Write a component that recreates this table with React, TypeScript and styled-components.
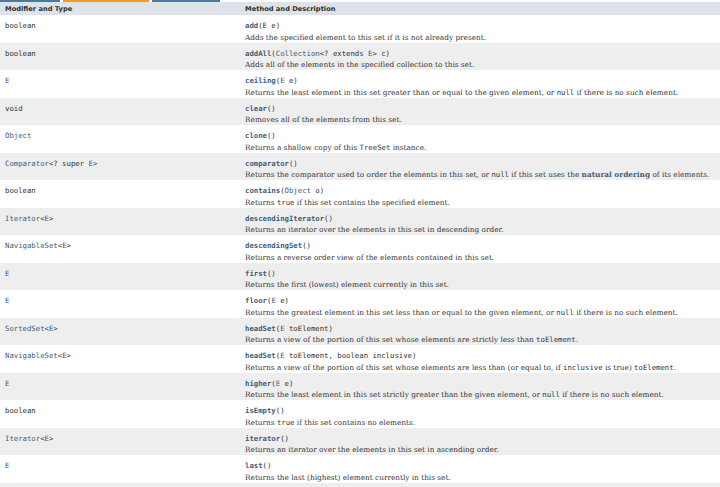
import React from "react";
import styled, { createGlobalStyle } from "styled-components";

const Global = createGlobalStyle`
  html, body { margin: 0; padding: 0; background: #ffffff; }
  body { overflow: hidden; }
`;

const Page = styled.div`
  width: 720px;
  height: 487px;
  overflow: hidden;
  background: #fff;
`;

const TabStrip = styled.div`
  display: flex;
  height: 2px;
  gap: 3px;
`;

const Tab = styled.div<{ $w: number; $active?: boolean }>`
  width: ${(p) => p.$w}px;
  background: ${(p) => (p.$active ? "#f8981d" : "#4d7a97")};
`;

const Table = styled.div`
  display: grid;
  grid-template-columns: 240px 1fr;
`;

const HeadCell = styled.div`
  background: #dee3e9;
  height: 13px;
  padding: 0 5px;
  display: flex;
  align-items: center;
  font-family: "DejaVu Sans", sans-serif;
  font-weight: bold;
  font-size: 6.7px;
  color: #2f312d;
`;

const Cell = styled.div<{ $alt: boolean }>`
  background: ${(p) => (p.$alt ? "#eeeeef" : "#ffffff")};
  padding: 5px 5px 0;
  height: 27.5px;
  box-sizing: border-box;
`;

const Filler = styled.div`
  grid-column: 1 / -1;
  background: #eeeeef;
  height: 10px;
`;

const CodeLine = styled.div`
  font-family: "DejaVu Sans Mono", monospace;
  font-size: 7.3px;
  line-height: 11.5px;
  color: #2f312d;
  white-space: nowrap;
`;

const Link = styled.span<{ $bold?: boolean }>`
  color: #3f5c77;
  font-weight: ${(p) => (p.$bold ? "bold" : "normal")};
`;

const Desc = styled.div`
  font-family: "DejaVu Serif", Georgia, serif;
  font-size: 7.35px;
  line-height: 11px;
  color: #353535;
  white-space: nowrap;
`;

const Code = styled.code`
  font-family: "DejaVu Sans Mono", monospace;
  font-size: 7.3px;
`;

const Strong = styled.span`
  font-weight: bold;
  color: #3f5c77;
`;

type Row = {
  type: React.ReactNode;
  name: string;
  params: React.ReactNode;
  desc: React.ReactNode;
};

const N = <Code>null</Code>;

const rows: Row[] = [
  { type: "boolean", name: "add", params: "(E e)", desc: "Adds the specified element to this set if it is not already present." },
  {
    type: "boolean",
    name: "addAll",
    params: (
      <>
        (<Link>Collection</Link>&lt;? extends <Link>E</Link>&gt; c)
      </>
    ),
    desc: "Adds all of the elements in the specified collection to this set.",
  },
  {
    type: <Link>E</Link>,
    name: "ceiling",
    params: <>(<Link>E</Link> e)</>,
    desc: <>Returns the least element in this set greater than or equal to the given element, or {N} if there is no such element.</>,
  },
  { type: "void", name: "clear", params: "()", desc: "Removes all of the elements from this set." },
  {
    type: <Link>Object</Link>,
    name: "clone",
    params: "()",
    desc: <>Returns a shallow copy of this <Code>TreeSet</Code> instance.</>,
  },
  {
    type: (
      <>
        <Link>Comparator</Link>&lt;? super <Link>E</Link>&gt;
      </>
    ),
    name: "comparator",
    params: "()",
    desc: (
      <>
        Returns the comparator used to order the elements in this set, or {N} if this set uses the <Strong>natural ordering</Strong> of its elements.
      </>
    ),
  },
  {
    type: "boolean",
    name: "contains",
    params: <>(<Link>Object</Link> o)</>,
    desc: <>Returns <Code>true</Code> if this set contains the specified element.</>,
  },
  {
    type: <><Link>Iterator</Link>&lt;<Link>E</Link>&gt;</>,
    name: "descendingIterator",
    params: "()",
    desc: "Returns an iterator over the elements in this set in descending order.",
  },
  {
    type: <><Link>NavigableSet</Link>&lt;<Link>E</Link>&gt;</>,
    name: "descendingSet",
    params: "()",
    desc: "Returns a reverse order view of the elements contained in this set.",
  },
  { type: <Link>E</Link>, name: "first", params: "()", desc: "Returns the first (lowest) element currently in this set." },
  {
    type: <Link>E</Link>,
    name: "floor",
    params: <>(<Link>E</Link> e)</>,
    desc: <>Returns the greatest element in this set less than or equal to the given element, or {N} if there is no such element.</>,
  },
  {
    type: <><Link>SortedSet</Link>&lt;<Link>E</Link>&gt;</>,
    name: "headSet",
    params: <>(<Link>E</Link> toElement)</>,
    desc: <>Returns a view of the portion of this set whose elements are strictly less than <Code>toElement</Code>.</>,
  },
  {
    type: <><Link>NavigableSet</Link>&lt;<Link>E</Link>&gt;</>,
    name: "headSet",
    params: <>(<Link>E</Link> toElement, boolean inclusive)</>,
    desc: (
      <>
        Returns a view of the portion of this set whose elements are less than (or equal to, if <Code>inclusive</Code> is true) <Code>toElement</Code>.
      </>
    ),
  },
  {
    type: <Link>E</Link>,
    name: "higher",
    params: <>(<Link>E</Link> e)</>,
    desc: <>Returns the least element in this set strictly greater than the given element, or {N} if there is no such element.</>,
  },
  {
    type: "boolean",
    name: "isEmpty",
    params: "()",
    desc: <>Returns <Code>true</Code> if this set contains no elements.</>,
  },
  {
    type: <><Link>Iterator</Link>&lt;<Link>E</Link>&gt;</>,
    name: "iterator",
    params: "()",
    desc: "Returns an iterator over the elements in this set in ascending order.",
  },
  { type: <Link>E</Link>, name: "last", params: "()", desc: "Returns the last (highest) element currently in this set." },
];

export default function App() {
  return (
    <Page>
      <Global />
      <TabStrip>
        <Tab $w={60} />
        <Tab $w={86} $active />
        <Tab $w={68} />
      </TabStrip>
      <Table>
        <HeadCell>Modifier and Type</HeadCell>
        <HeadCell>Method and Description</HeadCell>
        {rows.map((r, i) => {
          const alt = i % 2 === 1;
          return (
            <React.Fragment key={i}>
              <Cell $alt={alt}>
                <CodeLine>{r.type}</CodeLine>
              </Cell>
              <Cell $alt={alt}>
                <CodeLine>
                  <Link $bold>{r.name}</Link>
                  {r.params}
                </CodeLine>
                <Desc>{r.desc}</Desc>
              </Cell>
            </React.Fragment>
          );
        })}
        <Filler />
      </Table>
    </Page>
  );
}
